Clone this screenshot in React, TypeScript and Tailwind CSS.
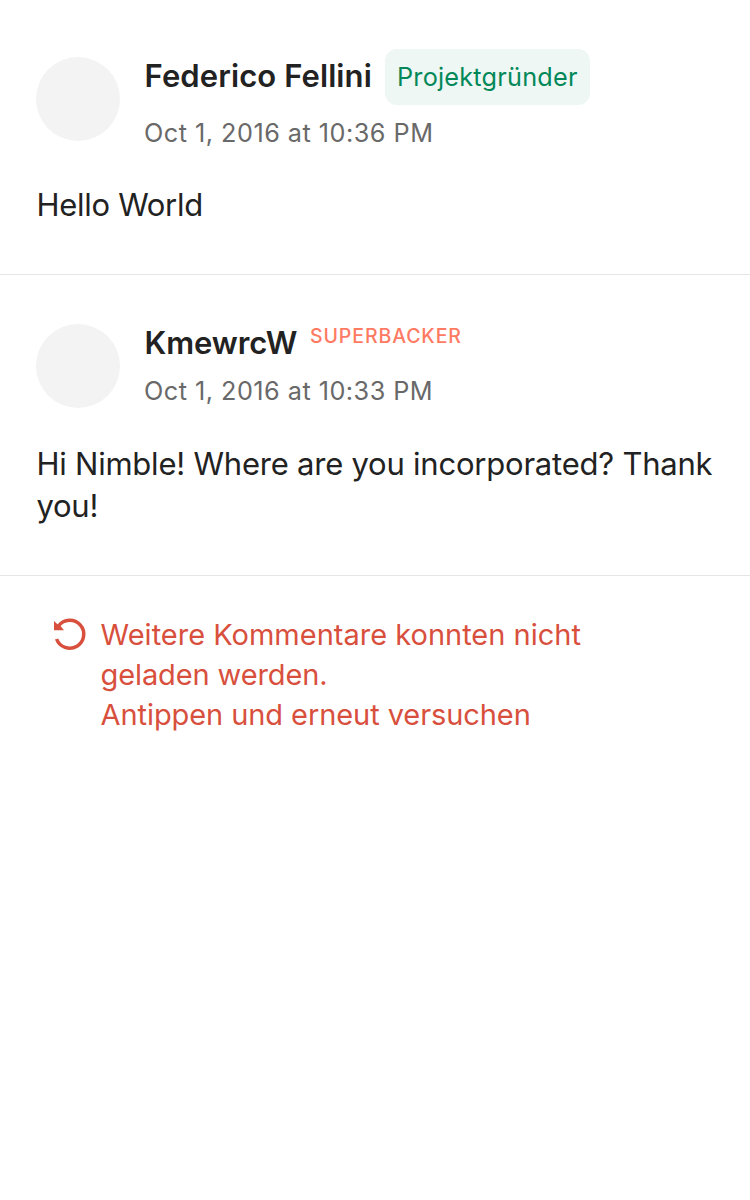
export default function App() {
  return (
    <main className="flex h-[1200px] w-[750px] flex-col bg-white font-['Inter',sans-serif] text-[#222222]">
      <article className="h-[275px] border-b border-[#e6e6e6] px-9 pt-[49px]">
        <header className="flex gap-6">
          <div className="mt-2 size-[84px] shrink-0 rounded-full bg-[#f3f3f3]" />
          <div className="min-w-0">
            <div className="flex h-14 items-center">
              <h2 className="w-[241px] pb-0.5 pl-[0.6px] whitespace-nowrap text-[31px] leading-[38px] font-semibold tracking-[0.1px]"><span>Federico Fellini</span></h2>
              <span className="flex h-14 w-[205px] items-center rounded-xl bg-[#eef7f4] pt-0.5 pl-3 text-[25.25px] tracking-[0.22px] whitespace-nowrap text-[#028858]"><span>Projektgründer</span></span>
            </div>
            <p className="mt-3 text-[25.25px] leading-8 tracking-[0.48px] whitespace-nowrap text-[#696969]"><span>Oct 1, 2016 at 10:36 PM</span></p>
          </div>
        </header>
        <p className="mt-[35px] pl-[0.5px] text-[31px] leading-[42px] tracking-[-0.3px]"><span>Hello World</span></p>
      </article>
      <article className="h-[301px] border-b border-[#e6e6e6] px-9 pt-[49px]">
        <header className="flex gap-6">
          <div className="size-[84px] shrink-0 rounded-full bg-[#f3f3f3]" />
          <div className="min-w-0">
            <div className="flex h-[38px]">
              <h2 className="w-[166px] pl-[0.6px] whitespace-nowrap text-[31px] leading-[38px] font-semibold tracking-[-0.1px]"><span>KmewrcW</span></h2>
              <span className="text-[19.5px] leading-6 font-medium tracking-[0.9px] text-[#ff7a63]"><span>SUPERBACKER</span></span>
            </div>
            <p className="mt-[13px] text-[25.25px] leading-8 tracking-[0.47px] whitespace-nowrap text-[#696969]"><span>Oct 1, 2016 at 10:33 PM</span></p>
          </div>
        </header>
        <p className="mt-[35px] pl-[0.4px] text-[31px] leading-[42px] whitespace-nowrap tracking-[-0.22px]"><span>Hi Nimble! Where are you incorporated? Thank</span><br /><span>you!</span></p>
      </article>
      <button className="flex items-start gap-3 pt-[39px] pl-[52px] text-left text-[#d8503d]">
        <svg className="mt-0.5 size-9 shrink-0" viewBox="0 0 36 36" fill="none">
          <path d="M4.6 22A14 14 0 1 0 6.6 8.8" stroke="currentColor" strokeWidth="3.5" />
          <path d="M2 3.9L5.2 7.1L8.5 9L12 13.3H2Z" fill="currentColor" />
        </svg>
        <span className="pl-[0.6px] text-[29px] leading-10 whitespace-nowrap"><span>Weitere Kommentare konnten nicht</span><br /><span className="tracking-[-0.12px]">geladen werden.</span><br /><span className="tracking-[-0.08px]">Antippen und erneut versuchen</span></span>
      </button>
    </main>
  );
}
